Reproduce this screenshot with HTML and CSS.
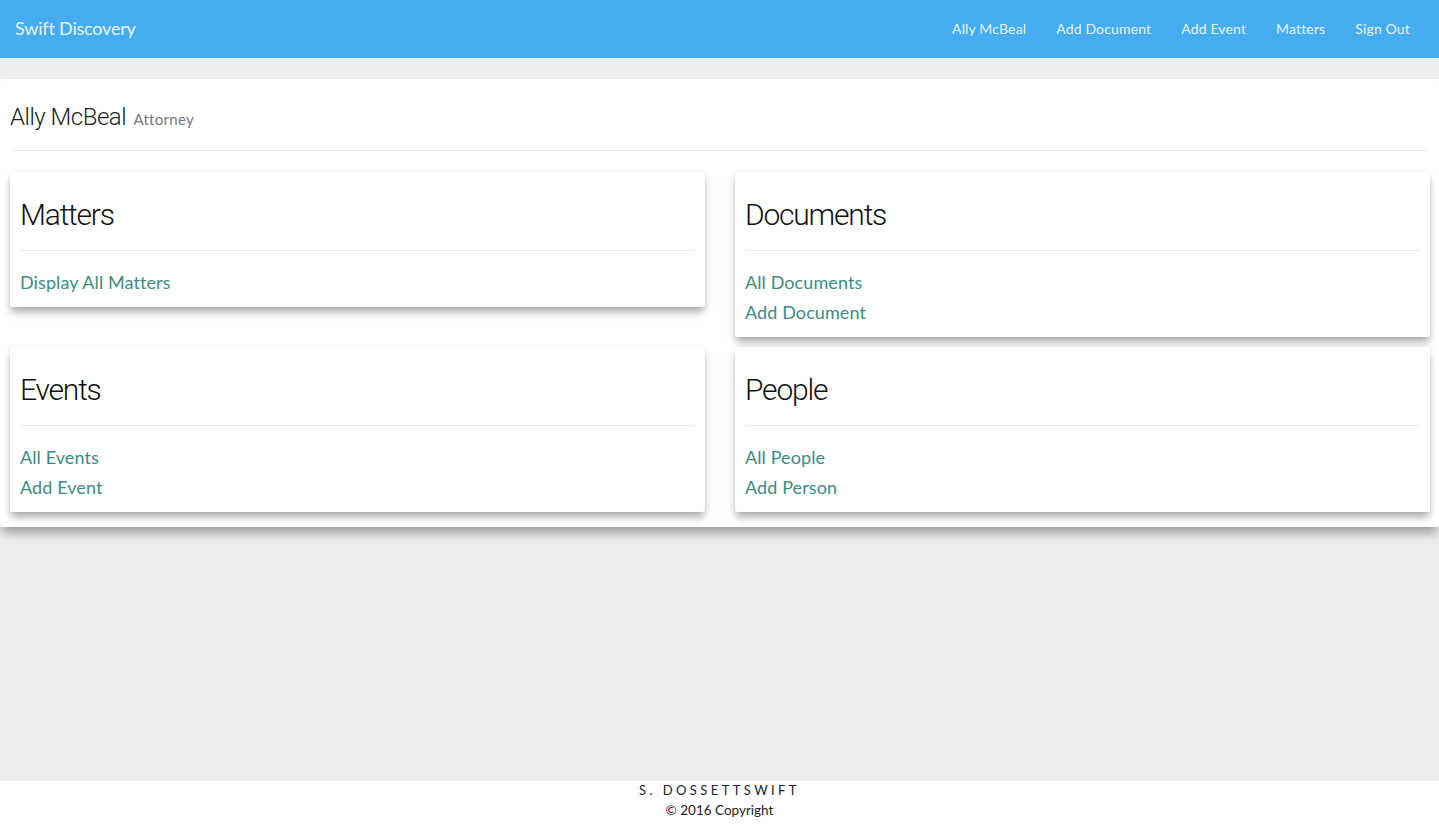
FILE: index.html
```html
<!DOCTYPE html>
<html lang="en">
<head>
<meta charset="utf-8">
<title>Swift Discovery</title>
<link rel="stylesheet" href="styles.css">
</head>
<body>
<div class="app">
  <nav class="navbar">
    <a class="brand" href="#">Swift Discovery</a>
    <ul class="nav-links">
      <li><a href="#">Ally McBeal</a></li>
      <li><a href="#">Add Document</a></li>
      <li><a href="#">Add Event</a></li>
      <li><a href="#">Matters</a></li>
      <li><a href="#">Sign Out</a></li>
    </ul>
  </nav>
  <main class="panel">
    <header class="page-header">
      <h1>Ally McBeal <small>Attorney</small></h1>
    </header>
    <div class="cards">
      <section class="card">
        <h2>Matters</h2>
        <hr>
        <a href="#">Display All Matters</a>
      </section>
      <section class="card">
        <h2>Documents</h2>
        <hr>
        <a href="#">All Documents</a>
        <a href="#">Add Document</a>
      </section>
      <section class="card">
        <h2>Events</h2>
        <hr>
        <a href="#">All Events</a>
        <a href="#">Add Event</a>
      </section>
      <section class="card">
        <h2>People</h2>
        <hr>
        <a href="#">All People</a>
        <a href="#">Add Person</a>
      </section>
    </div>
  </main>
</div>
<footer class="footer">
  <p class="sig">S. DOSSETTSWIFT</p>
  <p class="copy">© 2016 Copyright</p>
</footer>
</body>
</html>
```
FILE: styles.css
```css
* { box-sizing: border-box; }
html, body { margin: 0; padding: 0; }
body {
  background: #eeeeee;
  font-family: Lato, "Open Sans", sans-serif;
  color: #333;
}
a { text-decoration: none; }

.app { min-height: 781px; }

.navbar {
  height: 58px;
  background: #44acef;
  display: flex;
  align-items: center;
  justify-content: space-between;
  padding: 0 14px 2px 15px;
}
.brand {
  color: #e8f4fd;
  font-size: 18px;
  letter-spacing: -0.2px;
}
.nav-links {
  list-style: none;
  margin: 0;
  padding: 0;
  display: flex;
}
.nav-links a {
  display: block;
  padding: 0 15px;
  color: #e8f4fd;
  font-size: 14px;
  letter-spacing: 0.15px;
}

.panel {
  margin-top: 21px;
  background: #fff;
  padding: 25px 9px 15px 10px;
  box-shadow: 0 8px 10px -2px rgba(0,0,0,0.35);
  border-radius: 2px;
}
.page-header {
  border-bottom: 1px solid #eaeaea;
  padding-bottom: 18px;
  margin-bottom: 21px;
}
.page-header h1 {
  margin: 0;
  font-family: Roboto, "Liberation Sans", sans-serif;
  font-weight: 300;
  font-size: 24px;
  line-height: 26px;
  color: #222;
  letter-spacing: -0.5px;
}
.page-header small {
  font-family: Lato, sans-serif;
  font-weight: 400;
  font-size: 15px;
  color: #777;
  letter-spacing: 0.3px;
  margin-left: 2px;
}

.cards {
  display: grid;
  grid-template-columns: 1fr 1fr;
  column-gap: 30px;
  row-gap: 10px;
  align-items: start;
}
.card {
  background: #fff;
  padding: 26px 10px 10px;
  display: flex;
  flex-direction: column;
  align-items: flex-start;
  box-shadow: 0 6px 8px -1px rgba(0,0,0,0.33), 0 0 4px rgba(0,0,0,0.06);
  border-radius: 2px;
}
.card h2 {
  margin: 0;
  font-family: Roboto, "Liberation Sans", sans-serif;
  font-weight: 300;
  font-size: 30px;
  line-height: 33px;
  color: #111;
  letter-spacing: -1.2px;
}
.card hr {
  align-self: stretch;
  border: 0;
  border-top: 1px solid #eaeaea;
  margin: 19px 0 16px;
}
.card a {
  color: #3c8c85;
  font-size: 18px;
  line-height: 30px;
  letter-spacing: 0.1px;
}

.footer {
  background: #fff;
  text-align: center;
  padding: 0 0 20px;
}
.footer p { margin: 0; }
.sig {
  font-size: 13px;
  letter-spacing: 3.4px;
  line-height: 18px;
  color: #222;
}
.copy {
  font-size: 13.5px;
  line-height: 22px;
  color: #222;
}
```
